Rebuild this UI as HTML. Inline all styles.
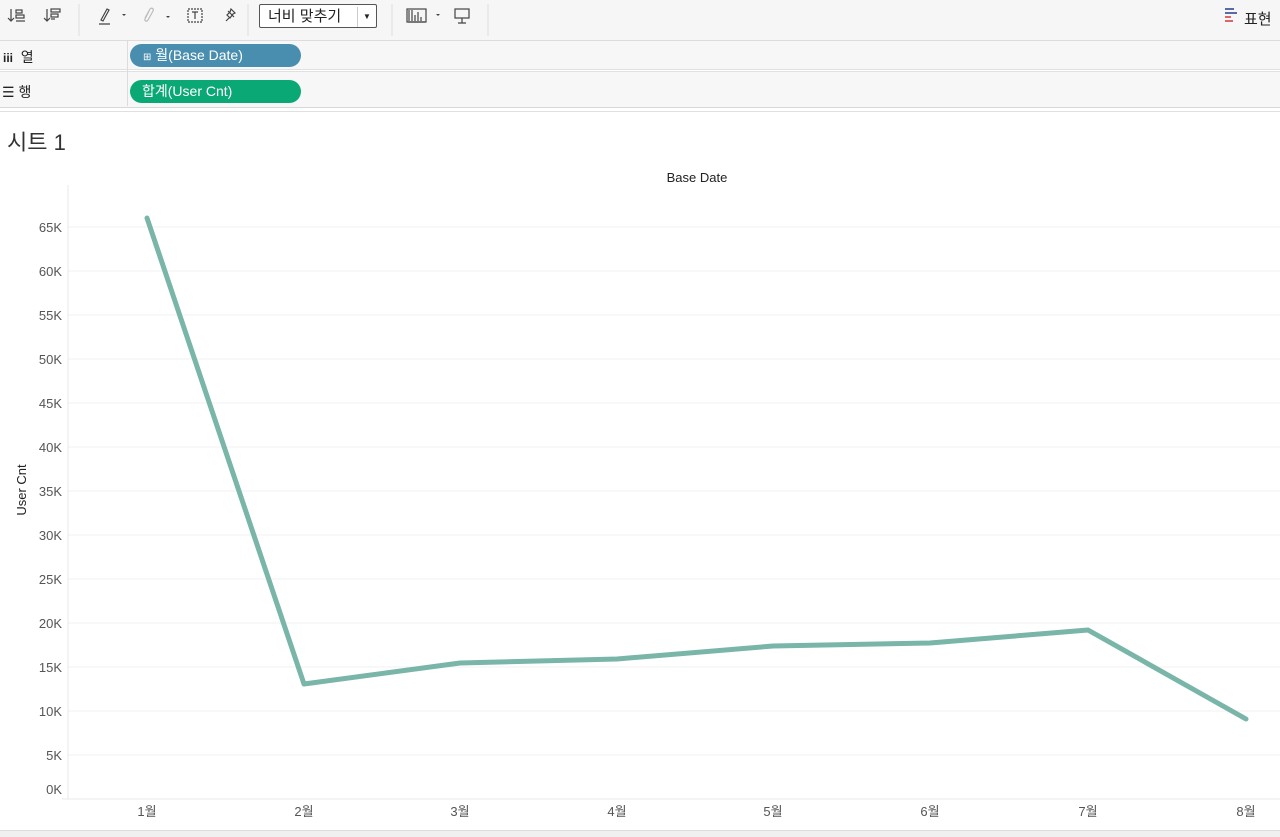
<!DOCTYPE html>
<html><head><meta charset="utf-8"><style>
body{margin:0;width:1280px;height:836px;overflow:hidden;background:#fff;font-family:"Liberation Sans","Noto Sans CJK KR",sans-serif;position:relative}
.abs{position:absolute}
</style></head><body>
<div class="abs" style="left:0;top:0;width:1280px;height:40px;background:#f6f6f6;border-bottom:1px solid #dcdcdc"></div>
<svg class="abs" style="left:0;top:0" width="1280" height="40">
<g stroke="#444" fill="none" stroke-width="1.2">
<path d="M11 9v12M8 18l3 3 3-3"/><rect x="16" y="10" width="6" height="3"/><rect x="16" y="15" width="8" height="3"/><path d="M16 21h9"/>
<path d="M47 9v12M44 18l3 3 3-3"/><rect x="51" y="9" width="9" height="3"/><rect x="51" y="14" width="7" height="3"/><path d="M51 19h4"/>
<path d="M101 20l6-11 2 1-6 11zM99 24h11"/>
<path d="M145 18l5-9c2-2 4 0 3 2l-5 9c-1 2-4 1-3-1l4-8" stroke="#bbb"/>
<rect x="188" y="9" width="14" height="13" stroke-dasharray="2 1"/><path d="M192 12h6M195 12v7"/>
<path d="M226 21l4-4M228 11l6 6M231 9l4 4-2 1-3 4-3-3 3-3z"/>
<path d="M409 10v11M412 10v11M415 15v6M418 12v9M421 17v4M408 22h17"/><rect x="407" y="9" width="19" height="13"/>
<rect x="455" y="9" width="14" height="9"/><path d="M462 18v5M458 23h8"/>
</g>
<path d="M122 14l2 2 2-2z M166 16l2 2 2-2z M436 14l2 2 2-2z" fill="#444"/>
<path d="M79 4v32M248 4v32M392 4v32M488 4v32" stroke="#ddd"/>
<rect x="1225" y="8" width="9" height="2" fill="#5a6aa8"/><rect x="1225" y="12" width="12" height="2" fill="#5a6aa8"/><rect x="1225" y="16" width="6" height="2" fill="#d66"/><rect x="1225" y="20" width="8" height="2" fill="#d66"/>
</svg>
<div class="abs" style="left:259px;top:4px;height:24px;border:1px solid #555;border-radius:2px;background:#fff;font-size:15px;line-height:24px;color:#222;padding-left:8px;box-sizing:border-box;width:118px">너비 맞추기<span style="position:absolute;right:0;top:2px;height:20px;border-left:1px solid #ccc;width:18px;text-align:center;font-size:8px;line-height:20px">▼</span></div>
<div class="abs" style="left:1244px;top:8px;font-size:15px;color:#222">표현</div>
<div class="abs" style="left:0;top:41px;width:1280px;height:28px;background:#f7f7f7;border-bottom:1px solid #e0e0e0"></div>
<div class="abs" style="left:0;top:71px;width:1280px;height:35px;background:#f7f7f7;border-top:1px solid #e0e0e0;border-bottom:1px solid #d8d8d8"></div>
<div class="abs" style="left:127px;top:41px;width:1px;height:65px;background:#dcdcdc"></div>
<div class="abs" style="left:3px;top:47px;font-size:14px;color:#222"><b style="font-size:12px">iii</b>&nbsp; 열</div>
<div class="abs" style="left:2px;top:82px;font-size:14px;color:#222">☰ 행</div>
<div class="abs" style="left:130px;top:44px;width:171px;height:23px;border-radius:12px;background:#4a8eaf;color:#fff;font-size:14px;line-height:23px;box-sizing:border-box;padding-left:13px"><span style="font-size:10px">⊞</span> 월(Base Date)</div>
<div class="abs" style="left:130px;top:80px;width:171px;height:23px;border-radius:12px;background:#0aa874;color:#fff;font-size:14px;line-height:23px;box-sizing:border-box;padding-left:12px">합계(User Cnt)</div>
<div class="abs" style="left:0;top:111px;width:1280px;height:1px;background:#e0e0e0"></div>
<div class="abs" style="left:7px;top:125px;font-size:22px;color:#333">시트 1</div>
<div class="abs" style="left:0;top:830px;width:1280px;height:6px;background:#f0f0f0;border-top:1px solid #ddd"></div>
<svg class="abs" style="left:0;top:0" width="1280" height="836" font-family="Liberation Sans, sans-serif">
<text x="697" y="182" font-size="13" text-anchor="middle" fill="#222">Base Date</text>
<text transform="translate(26,490) rotate(-90)" font-size="13" text-anchor="middle" fill="#222">User Cnt</text>
<g stroke="#f0f0f0">
<path d="M68 227H1280M68 271H1280M68 315H1280M68 359H1280M68 403H1280M68 447H1280M68 491H1280M68 535H1280M68 579H1280M68 623H1280M68 667H1280M68 711H1280M68 755H1280"/>
</g>
<path d="M68 185V799M62 799H1280" stroke="#e8e8e8"/>
<g font-size="13" fill="#555" text-anchor="end">
<text x="62" y="232">65K</text><text x="62" y="276">60K</text><text x="62" y="320">55K</text><text x="62" y="364">50K</text><text x="62" y="408">45K</text><text x="62" y="452">40K</text><text x="62" y="496">35K</text><text x="62" y="540">30K</text><text x="62" y="584">25K</text><text x="62" y="628">20K</text><text x="62" y="672">15K</text><text x="62" y="716">10K</text><text x="62" y="760">5K</text><text x="62" y="794">0K</text>
</g>
<g font-size="13" fill="#555" text-anchor="middle" font-family="Liberation Sans, Noto Sans CJK KR, sans-serif">
<text x="147" y="816">1월</text><text x="304" y="816">2월</text><text x="460" y="816">3월</text><text x="617" y="816">4월</text><text x="773" y="816">5월</text><text x="930" y="816">6월</text><text x="1088" y="816">7월</text><text x="1246" y="816">8월</text>
</g>
<polyline points="147,218 304,684 460,663 617,659 773,646 930,643 1088,630 1246,719" fill="none" stroke="#79b5a8" stroke-width="5" stroke-linejoin="round" stroke-linecap="round"/>
</svg>
</body></html>
